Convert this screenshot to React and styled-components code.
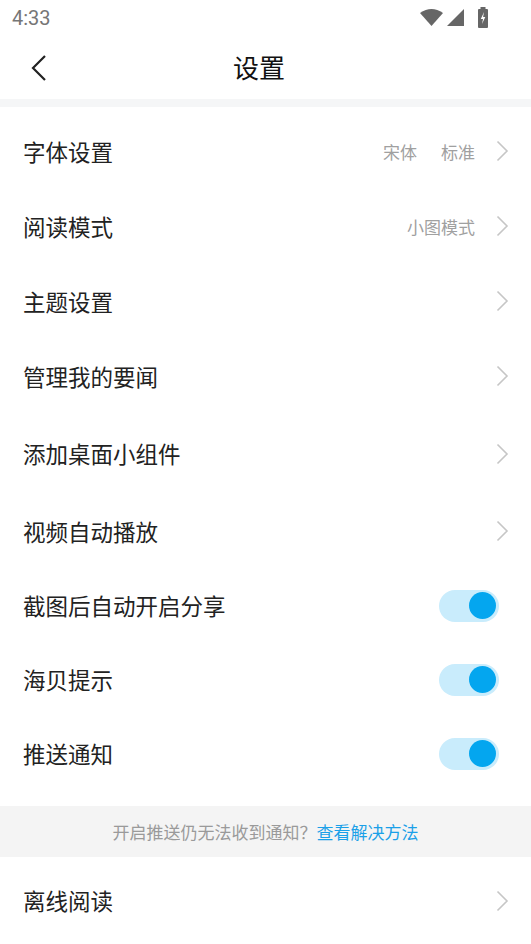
import React from 'react';
import styled, { createGlobalStyle } from 'styled-components';

const GlobalStyle = createGlobalStyle`
  html, body {
    margin: 0;
    padding: 0;
    background: #fff;
  }
  body {
    font-family: "Noto Sans CJK SC", "Noto Sans", sans-serif;
  }
`;

const Screen = styled.div`
  width: 531px;
  height: 944px;
  overflow: hidden;
  background: #fff;
  display: flex;
  flex-direction: column;
`;

const StatusBar = styled.div`
  height: 38px;
  display: flex;
  align-items: center;
  justify-content: space-between;
  padding: 0 42px 0 12px;
  box-sizing: border-box;
`;

const Time = styled.span`
  font-family: Roboto, "Liberation Sans", sans-serif;
  font-size: 20px;
  color: #767676;
  margin-top: -2px;
`;

const StatusIcons = styled.div`
  display: flex;
  align-items: center;
  gap: 3px;
  margin-top: -3px;
`;

const Header = styled.div`
  height: 62px;
  display: flex;
  align-items: center;
  justify-content: center;
  position: relative;
`;

const BackButton = styled.div`
  position: absolute;
  left: 30px;
  top: 16px;
  width: 18px;
  height: 28px;
`;

const Title = styled.h1`
  margin: 0 13px 0 0;
  font-size: 26px;
  font-weight: 400;
  color: #111;
  line-height: 1;
  margin-top: -2px;
`;

const Divider = styled.div`
  height: ${(p) => p.h}px;
  background: ${(p) => p.color || '#f4f4f4'};
  display: flex;
  align-items: center;
  justify-content: center;
`;

const List = styled.div`
  padding: ${(p) => p.top || 0}px 0 ${(p) => p.bottom || 0}px;
`;

const Row = styled.div`
  height: ${(p) => p.h || 75}px;
  display: flex;
  align-items: center;
  padding: 0 22px 0 23px;
`;

const Label = styled.span`
  flex: 1;
  font-size: 22.5px;
  color: #222;
  line-height: 1;
`;

const Value = styled.span`
  font-size: 17px;
  color: #a0a0a0;
  margin-left: 24px;
  line-height: 1;
`;

const ChevronWrap = styled.span`
  margin-left: 21px;
  display: flex;
  align-items: center;
`;

const Track = styled.div`
  width: 60px;
  height: 32px;
  border-radius: 16px;
  background: #c9ecfc;
  display: flex;
  align-items: center;
  justify-content: flex-end;
  padding-right: 3px;
  box-sizing: border-box;
  margin-right: 10px;
`;

const Knob = styled.div`
  width: 27px;
  height: 27px;
  border-radius: 50%;
  background: #04a6ef;
`;

const Notice = styled.span`
  font-size: 17px;
  color: #9a9a9a;
  line-height: 1;
`;

const NoticeLink = styled.span`
  color: #1aa0e8;
`;

const Chevron = () => (
  <ChevronWrap>
    <svg width="13" height="22" viewBox="0 0 13 22">
      <path d="M1.5 1.5 L11 11 L1.5 20.5" fill="none" stroke="#c6c6c6" strokeWidth="1.6" />
    </svg>
  </ChevronWrap>
);

const Toggle = () => (
  <Track>
    <Knob />
  </Track>
);

const rows = [
  { label: '字体设置', values: ['宋体', '标准'], h: 75 },
  { label: '阅读模式', values: ['小图模式'], h: 75 },
  { label: '主题设置', h: 75 },
  { label: '管理我的要闻', h: 75 },
  { label: '添加桌面小组件', h: 80 },
  { label: '视频自动播放', h: 75 },
  { label: '截图后自动开启分享', toggle: true, h: 74 },
  { label: '海贝提示', toggle: true, h: 74 },
  { label: '推送通知', toggle: true, h: 74 },
];

function StatusGlyphs() {
  return (
    <StatusIcons>
      <svg width="23" height="18" viewBox="0 0 23 18">
        <path d="M0 5 Q11.5 -3 23 5 L11.5 18 Z" fill="#666" />
      </svg>
      <svg width="19" height="18" viewBox="0 0 19 18">
        <path d="M1 18 L18 1 L18 18 Z" fill="#666" />
      </svg>
      <svg width="12" height="21" viewBox="0 0 12 21" style={{ marginLeft: 9 }}>
        <rect x="3.5" y="0" width="5" height="3" fill="#666" />
        <rect x="1" y="2" width="10" height="19" rx="1" fill="#666" />
        <path d="M7 5 L3.8 12 L6 12 L5 17 L8.3 10 L6.1 10 Z" fill="#fff" />
      </svg>
    </StatusIcons>
  );
}

export default function App() {
  return (
    <Screen>
      <GlobalStyle />
      <StatusBar>
        <Time>4:33</Time>
        <StatusGlyphs />
      </StatusBar>
      <Header>
        <BackButton>
          <svg width="18" height="28" viewBox="0 0 18 28">
            <path d="M15 2 L3 14 L15 26" fill="none" stroke="#222" strokeWidth="2.2" />
          </svg>
        </BackButton>
        <Title>设置</Title>
      </Header>
      <Divider h={8} color="#f5f6f7" />
      <List top={7} bottom={15}>
        {rows.map((r) => (
          <Row key={r.label} h={r.h}>
            <Label>{r.label}</Label>
            {r.values && r.values.map((v) => <Value key={v}>{v}</Value>)}
            {r.toggle ? <Toggle /> : <Chevron />}
          </Row>
        ))}
      </List>
      <Divider h={52}>
        <Notice>
          开启推送仍无法收到通知？<NoticeLink>查看解决方法</NoticeLink>
        </Notice>
      </Divider>
      <Row h={88}>
        <Label>离线阅读</Label>
        <Chevron />
      </Row>
    </Screen>
  );
}
